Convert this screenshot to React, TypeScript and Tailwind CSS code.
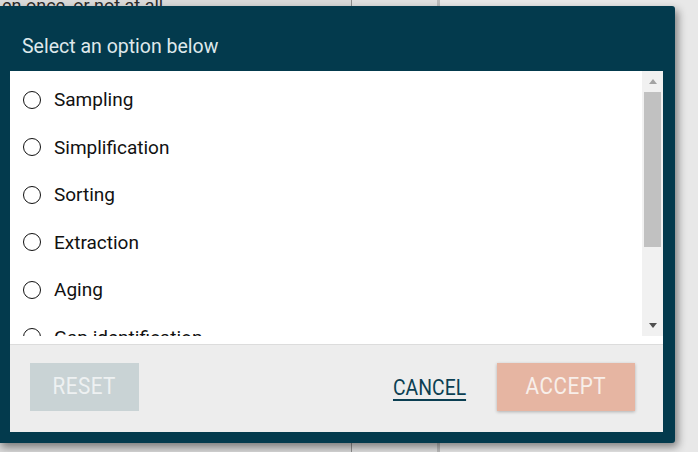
import type { FC } from 'react';

const options = [
  'Sampling',
  'Simplification',
  'Sorting',
  'Extraction',
  'Aging',
  'Gap identification',
  'Classification',
];

const Radio: FC<{ label: string }> = ({ label }) => (
  <label className="flex items-center h-[47.5px] pl-[13px] gap-[13px] shrink-0">
    <span className="w-[18px] h-[18px] rounded-full border-[1.5px] border-[#111] bg-white" />
    <span className="text-[19px] text-[#111] leading-none">{label}</span>
  </label>
);

const ScrollBar: FC = () => (
  <div className="w-[21px] h-full bg-[#f1f1f1] flex flex-col items-center shrink-0">
    <div className="h-[21px] w-full flex items-center justify-center">
      <span className="w-0 h-0 border-l-[4.5px] border-r-[4.5px] border-b-[5px] border-l-transparent border-r-transparent border-b-[#a3a3a3]" />
    </div>
    <div className="h-[155px] w-[17px] bg-[#c1c1c1]" />
    <div className="flex-1" />
    <div className="h-[21px] w-full flex items-center justify-center">
      <span className="w-0 h-0 border-l-[4.5px] border-r-[4.5px] border-t-[5px] border-l-transparent border-r-transparent border-t-[#505050]" />
    </div>
  </div>
);

const App: FC = () => {
  return (
    <div
      className="relative w-[698px] h-[452px] overflow-hidden bg-[#e2e2e2]"
      style={{ fontFamily: 'Roboto, "Liberation Sans", sans-serif' }}
    >
      {/* page behind the dialog */}
      <div className="flex h-full">
        <div className="w-[352px] border-r border-[#8f8f8f] bg-[#dadada]">
          <p className="-mt-[8px] pl-[2px] text-[18px] text-[#2a2a2a]">
            en once, or not at all.
          </p>
        </div>
        <div className="w-[88px] border-r-[3px] border-[#bdbdbd] bg-[#e0e0e0]" />
        <div className="flex-1 bg-[#e8e8e8]" />
      </div>

      {/* dialog */}
      <div className="absolute left-[-2px] top-[6px] w-[677px] h-[437px] bg-[#033a4d] rounded-[3px] shadow-[3px_4px_8px_rgba(0,0,0,0.45)] flex flex-col pl-[12px] pr-[12px] pb-[11px]">
        <div className="h-[65px] shrink-0 flex items-center pl-[12px] pt-[16px]">
          <h3 className="text-[19.5px] text-[#dfe8eb]">Select an option below</h3>
        </div>
        <div className="flex-1 flex flex-col bg-white min-h-0">
          <div className="h-[274px] shrink-0 pb-[8px] border-b border-[#dcdcdc]">
            <div className="flex h-full">
              <div className="flex-1 flex flex-col overflow-hidden pt-[5px]">
                {options.map((o) => (
                  <Radio key={o} label={o} />
                ))}
              </div>
              <ScrollBar />
            </div>
          </div>
          <div className="flex-1 bg-[#ededed] flex items-center pl-[20px] pr-[28px] pb-[3px]">
            <button className="w-[109px] h-[48px] bg-[#c9d3d5] text-[#eef1f2] text-[23px] tracking-[0.5px]">
              <span className="inline-block scale-x-[0.9]">RESET</span>
            </button>
            <div className="flex-1" />
            <button className="text-[22px] text-[#0b3f52] underline underline-offset-[4px] decoration-[2px] scale-x-[0.88] mr-[26px]">
              CANCEL
            </button>
            <button className="w-[138px] h-[48px] bg-[#e6b5a2] text-[#f8efea] text-[23px] tracking-[0.6px] shadow-[0_1px_3px_rgba(0,0,0,0.25)]">
              <span className="inline-block scale-x-[0.9]">ACCEPT</span>
            </button>
          </div>
        </div>
      </div>
    </div>
  );
};

export default App;
